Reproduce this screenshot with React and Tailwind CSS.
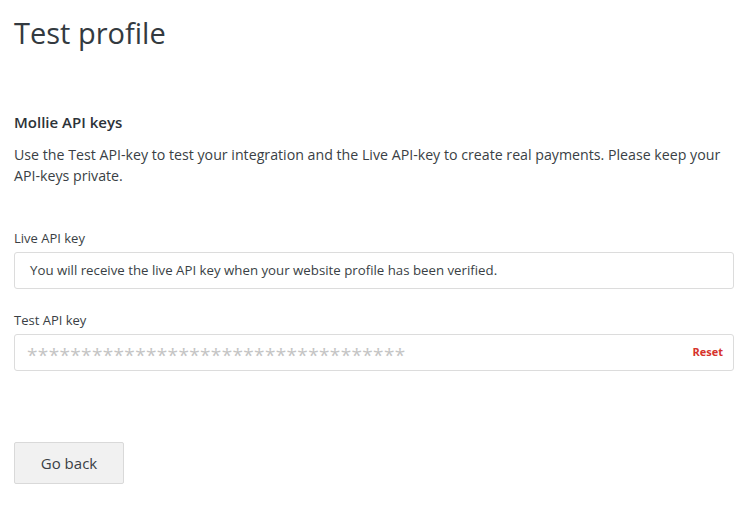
export default function App() {
  return (
    <div
      className="min-h-[505px] bg-white text-[#3a3f45] pl-[14px] pr-[21px] pt-[14px]"
      style={{ fontFamily: "'Open Sans', 'Noto Sans', sans-serif" }}
    >
      <h1 className="text-[29px] leading-[38px] text-[#333a40]">Test profile</h1>

      {/* api keys */}
      <div className="mt-[60px]">
        <h2 className="text-[15px] font-semibold leading-[20px] text-[#2c3238]">
          Mollie API keys
        </h2>
        <p className="mt-[12px] text-[14.2px] leading-[21px]">
          Use the Test API-key to test your integration and the Live API-key to
          create real payments. Please keep your API-keys private.
        </p>

        <div className="mt-[43px]">
          <label className="block text-[13px] leading-[18px]">Live API key</label>
          <div className="mt-[5px] h-[37px] flex items-center px-[15px] border border-[#dcdcdc] rounded-[3px] text-[13.25px]">
            You will receive the live API key when your website profile has been
            verified.
          </div>
        </div>

        <div className="mt-[22px]">
          <label className="block text-[13px] leading-[18px]">Test API key</label>
          <div className="mt-[5px] h-[37px] flex items-center justify-between pl-[12px] pr-[10px] border border-[#dcdcdc] rounded-[3px]">
            <span className="text-[19px] leading-[20px] text-[#c4c4c4] tracking-[0.35px] translate-y-[2px]">
              ***********************************
            </span>
            <button className="text-[11px] font-bold text-[#d6332b]">Reset</button>
          </div>
        </div>
      </div>

      <button className="mt-[71px] w-[110px] h-[42px] bg-[#f1f1f1] border border-[#d9d9d9] rounded-[2px] text-[15px] text-[#3a3f45]">
        Go back
      </button>
    </div>
  );
}
